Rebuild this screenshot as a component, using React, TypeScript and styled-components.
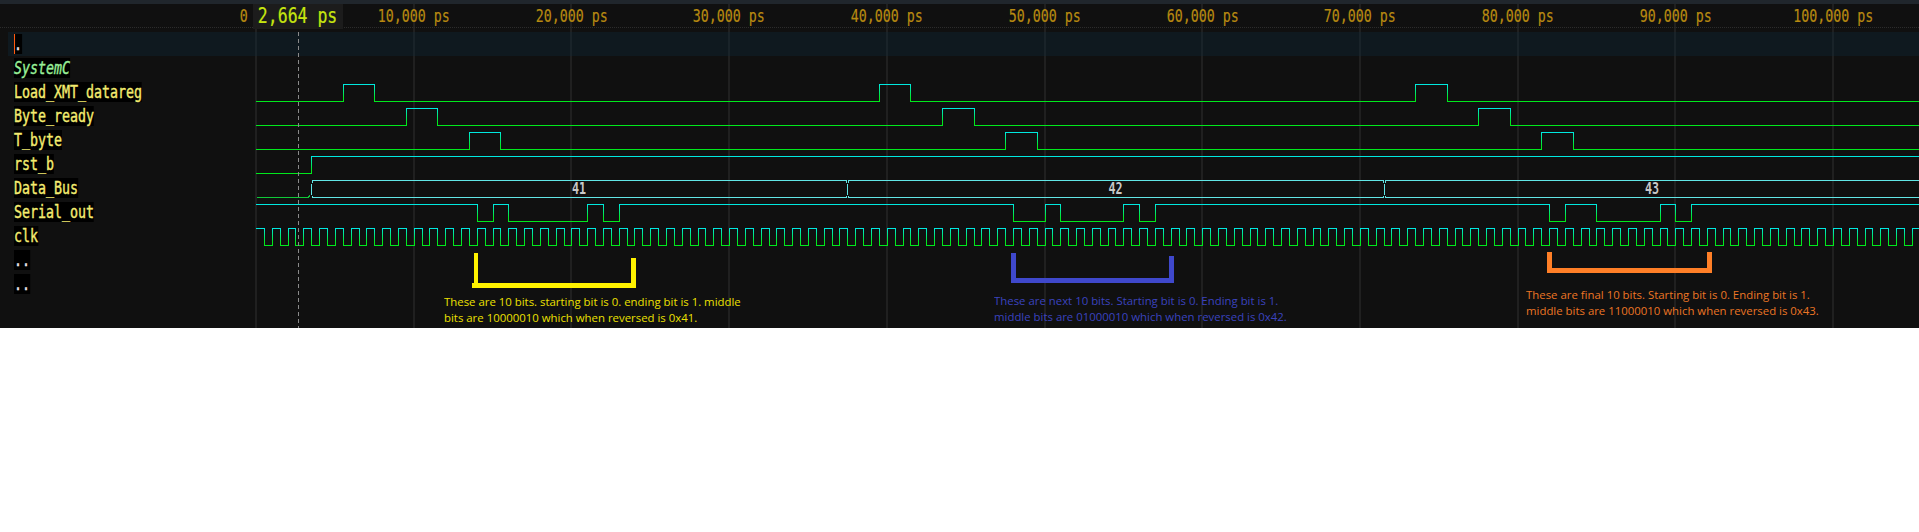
import React from 'react';
import styled, { createGlobalStyle } from 'styled-components';

const PS_TO_PX = 0.01577;
const WAVE_WIDTH = 1663;
const HIGH = 4.5;
const LOW = 21.5;
const MONO = '"DejaVu Sans Mono", "Liberation Mono", monospace';

const toX = (t: number) => Math.round(t * PS_TO_PX) + 0.5;

// edges: times where the level flips, the first level is given by startHigh
function wavePath(edges: number[], startHigh: boolean) {
  let level = startHigh;
  let d = `M0 ${level ? HIGH : LOW}`;
  edges.forEach(t => {
    const x = toX(t);
    d += ` L${x} ${level ? HIGH : LOW}`;
    level = !level;
    d += ` L${x} ${level ? HIGH : LOW}`;
  });
  d += ` L${WAVE_WIDTH} ${level ? HIGH : LOW}`;
  return d;
}

const pulses = (starts: number[], width: number) =>
  starts.flatMap(s => [s, s + width]);

const serialEdges = [
  14000, 15000, 16000, 21000, 22000, 23000, 48000, 50000, 51000, 55000, 56000,
  57000, 82000, 83000, 85000, 89000, 90000, 91000,
];

const clockEdges = Array.from({ length: 212 }, (_, i) => 500 + i * 500);

const busEdges = [3500, 37500, 71500, 105500];
const busValues = ['41', '42', '43'];

type NameKind = 'signal' | 'scope' | 'dots';

interface Signal {
  name: string;
  kind: NameKind;
  selected?: boolean;
  path?: string;
  bus?: boolean;
}

const signals: Signal[] = [
  { name: '.', kind: 'dots', selected: true },
  { name: 'SystemC', kind: 'scope' },
  {
    name: 'Load_XMT_datareg',
    kind: 'signal',
    path: wavePath(pulses([5500, 39500, 73500], 2000), false),
  },
  {
    name: 'Byte_ready',
    kind: 'signal',
    path: wavePath(pulses([9500, 43500, 77500], 2000), false),
  },
  {
    name: 'T_byte',
    kind: 'signal',
    path: wavePath(pulses([13500, 47500, 81500], 2000), false),
  },
  { name: 'rst_b', kind: 'signal', path: wavePath([3500], false) },
  { name: 'Data_Bus', kind: 'signal', bus: true },
  { name: 'Serial_out', kind: 'signal', path: wavePath(serialEdges, true) },
  { name: 'clk', kind: 'signal', path: wavePath(clockEdges, true) },
  { name: '..', kind: 'dots' },
  { name: '..', kind: 'dots' },
];

const ticks = [10, 20, 30, 40, 50, 60, 70, 80, 90, 100].map(
  n => `${n},000 ps`
);

const App: React.FC = () => (
  <>
    <GlobalStyle />
    <Panel>
      <TopBar />
      <GridLines width={WAVE_WIDTH} height={328}>
        <line x1="1" y1="28" x2="1" y2="328" />
        {ticks.map((_, i) => {
          const x = Math.round((i + 1) * 10000 * PS_TO_PX) + 1;
          return <line key={x} x1={x} y1="4" x2={x} y2="328" />;
        })}
      </GridLines>

      <Ruler>
        <ZeroLabel>
          <TickText>0</TickText>
        </ZeroLabel>
        <CursorTime>
          <CursorText>2,664 ps</CursorText>
        </CursorTime>
        <TickList>
          {ticks.map(label => (
            <Tick key={label}>
              <TickText>{label}</TickText>
            </Tick>
          ))}
        </TickList>
      </Ruler>

      <Rows>
        {signals.map((signal, idx) => (
          <Row key={idx} $selected={signal.selected}>
            <NameCell>
              <Name $kind={signal.kind} $selected={signal.selected}>
                {signal.name}
              </Name>
            </NameCell>
            {signal.path && <Wave id={`edge-${idx}`} d={signal.path} />}
            {signal.bus && <BusWave />}
          </Row>
        ))}
      </Rows>

      <Cursor />

      <Note $left={472} $top={252} $color="#fff200">
        <Bracket width="165" height="37">
          <path d="M4 1 V33.5 M161.5 6 V33.5" strokeWidth="4.5" />
          <path d="M0 33.5 H164" strokeWidth="5" />
        </Bracket>
        <NoteText $left={-28} $top={5}>
          <span>These are 10 bits. starting bit is 0. ending bit is 1. middle</span>
          <span>bits are 10000010 which when reversed is 0x41.</span>
        </NoteText>
      </Note>

      <Note $left={1011} $top={252} $color="#3f48cc">
        <Bracket width="164" height="32">
          <path d="M2.5 1 V28.5 M160.5 4 V28.5" strokeWidth="5" />
          <path d="M0 28 H163" strokeWidth="5" />
        </Bracket>
        <NoteText $left={-17} $top={9}>
          <span>These are next 10 bits. Starting bit is 0. Ending bit is 1.</span>
          <span>middle bits are 01000010 which when reversed is 0x42.</span>
        </NoteText>
      </Note>

      <Note $left={1547} $top={252} $color="#ff7f27">
        <Bracket width="166" height="22">
          <path d="M2.5 0 V21 M162.5 0 V21" strokeWidth="5" />
          <path d="M0 18.5 H165" strokeWidth="5" />
        </Bracket>
        <NoteText $left={-21} $top={13}>
          <span>These are final 10 bits. Starting bit is 0. Ending bit is 1.</span>
          <span>middle bits are 11000010 which when reversed is 0x43.</span>
        </NoteText>
      </Note>
    </Panel>
  </>
);

const Wave: React.FC<{ id: string; d: string }> = ({ id, d }) => (
  <WaveSvg width={WAVE_WIDTH} height={24}>
    <defs>
      <linearGradient
        id={id}
        gradientUnits="userSpaceOnUse"
        x1="0"
        y1={HIGH}
        x2="0"
        y2={LOW}
      >
        <stop offset="0" stopColor="#00e8e0" />
        <stop offset="0.8" stopColor="#00e81c" />
        <stop offset="1" stopColor="#00e81c" />
      </linearGradient>
    </defs>
    <path d={d} stroke={`url(#${id})`} />
  </WaveSvg>
);

const BusWave: React.FC = () => {
  const xs = busEdges.map(t => Math.round(t * PS_TO_PX));
  return (
    <WaveSvg width={WAVE_WIDTH} height={24}>
      <path d={`M1 ${LOW} H${xs[0] - 3} L${xs[0] - 1} ${LOW - 2}`} stroke="#10c838" />
      {busValues.map((value, i) => {
        const from = xs[i];
        const to = xs[i + 1];
        const outline = [
          `M${from + 0.5} ${LOW - 3} V${HIGH + 3}`,
          `M${from + 1.5} ${HIGH + 2} V${HIGH} H${to - 0.5} V${HIGH + 2}`,
          `M${from + 1.5} ${LOW - 2} V${LOW} H${to - 0.5} V${LOW - 2}`,
        ].join(' ');
        return (
          <g key={value}>
            <path d={outline} stroke="#62e6e6" />
            <BusValue
              transform={`translate(${(from + to) / 2} 18) scale(0.78 1)`}
            >
              {value}
            </BusValue>
          </g>
        );
      })}
    </WaveSvg>
  );
};

const GlobalStyle = createGlobalStyle`
  html, body {
    margin: 0;
    background: #fff;
  }
`;

const Panel = styled.div`
  position: relative;
  overflow: hidden;
  display: flex;
  flex-direction: column;
  height: 328px;
  background: #101010;
`;

const TopBar = styled.div`
  flex: none;
  height: 4px;
  background: #20262c;
`;

const GridLines = styled.svg`
  position: absolute;
  top: 0;
  left: 255px;

  line {
    stroke: #202020;
    stroke-width: 2;
  }
`;

const Ruler = styled.div`
  position: relative;
  flex: none;
  display: flex;
  box-sizing: border-box;
  height: 24px;
  margin-bottom: 4px;
  border-bottom: 1px dotted #2c2c2c;
  font-family: ${MONO};
  white-space: nowrap;
`;

const ZeroLabel = styled.div`
  flex: none;
  width: 248px;
  text-align: right;
  line-height: 24px;
`;

const TickText = styled.span`
  display: inline-block;
  font-size: 18px;
  color: #b88a10;
  -webkit-text-stroke: 0.2px #b88a10;
  transform: scaleX(0.738);
  transform-origin: right center;
`;

const CursorTime = styled.div`
  flex: none;
  display: flex;
  justify-content: center;
  width: 90px;
  height: 25px;
  margin-left: 5px;
  background: #1c1c1c;
  line-height: 25px;
`;

const CursorText = styled.span`
  flex: none;
  font-size: 21px;
  color: #c6e60f;
  -webkit-text-stroke: 0.2px #c6e60f;
  transform: scaleX(0.785);
`;

const TickList = styled.div`
  flex: none;
  display: flex;
  margin-left: -8px;
`;

const Tick = styled.div`
  flex: none;
  width: 157.7px;
  text-align: center;
  line-height: 24px;

  ${TickText} {
    transform-origin: center;
  }
`;

const Rows = styled.div`
  position: relative;
  display: flex;
  flex-direction: column;
  padding-left: 8px;
`;

const Row = styled.div<{ $selected?: boolean }>`
  display: grid;
  grid-template-columns: 248px 1fr;
  height: 24px;
  background: ${p => (p.$selected ? 'rgba(14, 41, 56, 0.4)' : 'transparent')};
`;

const NameCell = styled.div`
  padding: 2px 0 2px 6px;
`;

const nameColors: Record<NameKind, string> = {
  signal: '#f4ec70',
  scope: '#98f098',
  dots: '#e8e8e8',
};

const Name = styled.span<{ $kind: NameKind; $selected?: boolean }>`
  display: inline-block;
  height: 20px;
  background: #000;
  font-family: ${MONO};
  font-size: 18px;
  font-style: ${p => (p.$kind === 'scope' ? 'italic' : 'normal')};
  line-height: 20px;
  color: ${p => nameColors[p.$kind]};
  -webkit-text-stroke: 0.4px ${p => nameColors[p.$kind]};
  box-shadow: ${p => (p.$selected ? 'inset 1.4px 0 0 #ff5a10' : 'none')};
  transform: scaleX(0.738);
  transform-origin: left center;
  vertical-align: top;
`;

const WaveSvg = styled.svg`
  display: block;
  overflow: visible;

  path {
    fill: none;
    stroke-width: 1;
    shape-rendering: crispEdges;
  }
`;

const BusValue = styled.text`
  fill: #c8c8c8;
  font-family: ${MONO};
  font-size: 15px;
  font-weight: 700;
  text-anchor: middle;
`;

const Cursor = styled.div`
  position: absolute;
  top: 32px;
  bottom: 0;
  left: 298px;
  width: 1px;
  background: repeating-linear-gradient(
    to bottom,
    #8a8a8a 0 4px,
    transparent 4px 7px
  );
`;

const Note = styled.div<{ $left: number; $top: number; $color: string }>`
  position: absolute;
  top: ${p => p.$top}px;
  left: ${p => p.$left}px;
  color: ${p => p.$color};
`;

const Bracket = styled.svg`
  display: block;

  path {
    fill: none;
    stroke: currentColor;
    shape-rendering: crispEdges;
  }
`;

const NoteText = styled.div<{ $left: number; $top: number }>`
  display: flex;
  flex-direction: column;
  margin: ${p => p.$top}px 0 0 ${p => p.$left}px;
  font-family: 'Open Sans', sans-serif;
  font-size: 11.4px;
  line-height: 16px;
  white-space: nowrap;
  opacity: 0.92;
`;

export default App;
